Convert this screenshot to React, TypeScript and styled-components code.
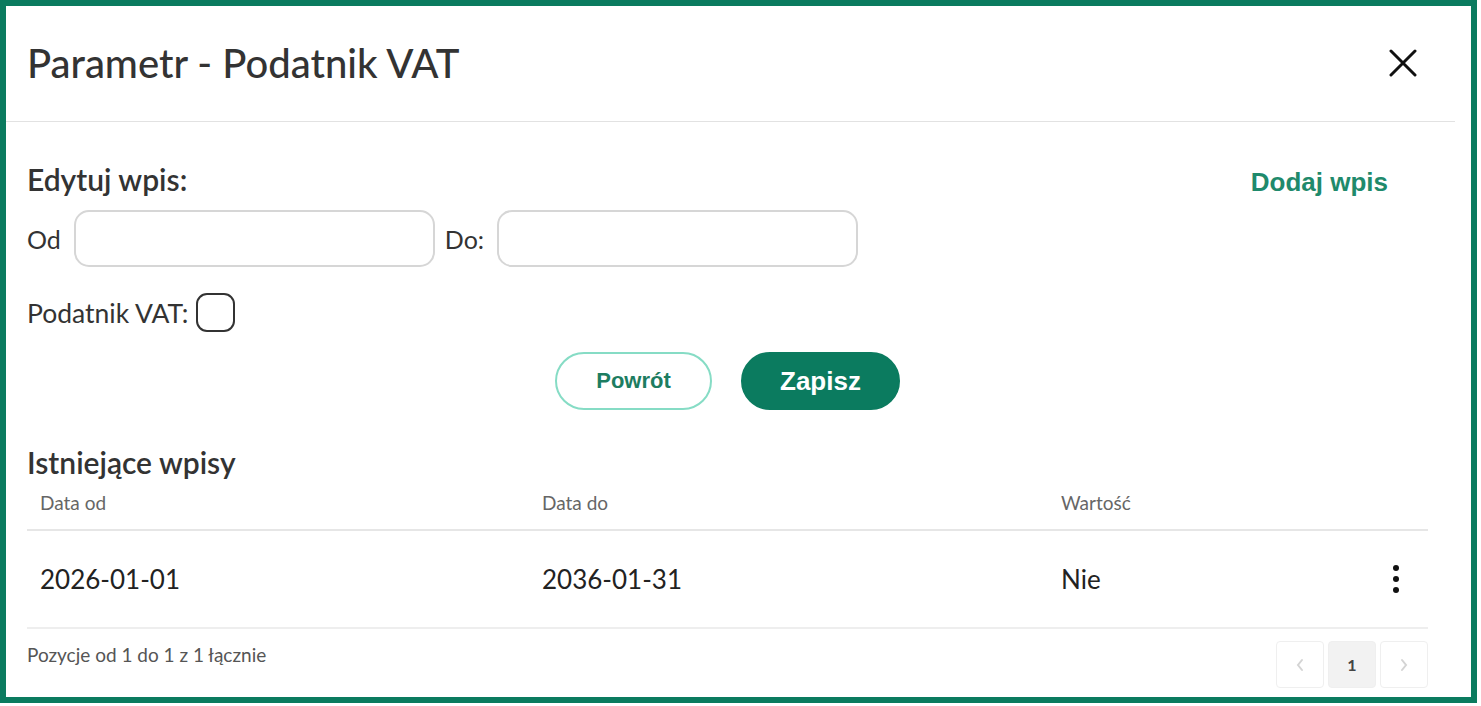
import React from 'react';
import styled, { createGlobalStyle } from 'styled-components';

type Entry = {
  id: number,
  from: string,
  to: string,
  value: string,
}

const entries: Entry[] = [
  { id: 1, from: '2026-01-01', to: '2036-01-31', value: 'Nie' },
];

const GlobalStyle = createGlobalStyle`
  * {
    box-sizing: border-box;
  }
  body {
    margin: 0;
    background: #fff;
    font-family: Lato, "Noto Sans", sans-serif;
    color: #333;
  }
`;

const CloseIcon = () => (
  <svg width="28" height="28" viewBox="0 0 28 28">
    <path d="M2 2 L26 26 M26 2 L2 26" stroke="#111" strokeWidth="3" strokeLinecap="round" />
  </svg>
);

const KebabIcon = () => (
  <svg width="8" height="30" viewBox="0 0 8 30">
    <circle cx="4" cy="4" r="3" fill="#111" />
    <circle cx="4" cy="15" r="3" fill="#111" />
    <circle cx="4" cy="26" r="3" fill="#111" />
  </svg>
);

const Chevron = ({ dir }: { dir: 'left' | 'right' }) => (
  <svg width="10" height="14" viewBox="0 0 10 14">
    <path
      d={dir === 'left' ? 'M7 2 L3 7 L7 12' : 'M3 2 L7 7 L3 12'}
      stroke="#d4d4d4"
      strokeWidth="2"
      fill="none"
      strokeLinecap="round"
    />
  </svg>
);

const App = () => {
  const renderRows = (): JSX.Element[] => {
    return entries.map(item => (
      <Row key={item.id}>
        <Cell>{item.from}</Cell>
        <Cell>{item.to}</Cell>
        <Cell>{item.value}</Cell>
        <ActionCell>
          <KebabIcon />
        </ActionCell>
      </Row>
    ));
  };

  return (
    <>
      <GlobalStyle />
      <Frame>
        <Header>
          <Title>Parametr - Podatnik VAT</Title>
          <CloseButton>
            <CloseIcon />
          </CloseButton>
        </Header>
        <Body>
          <EditHead>
            <SectionTitle>Edytuj wpis:</SectionTitle>
            <AddLink>Dodaj wpis</AddLink>
          </EditHead>
          <DateRow>
            <Label>Od</Label>
            <Input />
            <Label $gapLeft>Do:</Label>
            <Input />
          </DateRow>
          <CheckRow>
            <Label $wide>Podatnik VAT:</Label>
            <Checkbox />
          </CheckRow>
          <Buttons>
            <Button $primary={false}>Powrót</Button>
            <Button $primary>Zapisz</Button>
          </Buttons>
          <ListTitle>Istniejące wpisy</ListTitle>
          <Table>
            <HeadRow>
              <HeadCell>Data od</HeadCell>
              <HeadCell>Data do</HeadCell>
              <HeadCell>Wartość</HeadCell>
              <HeadCell />
            </HeadRow>
            {renderRows()}
          </Table>
          <Footer>
            <Summary>Pozycje od 1 do 1 z 1 łącznie</Summary>
            <Pager>
              <PageButton $active={false}><Chevron dir="left" /></PageButton>
              <PageButton $active>1</PageButton>
              <PageButton $active={false}><Chevron dir="right" /></PageButton>
            </Pager>
          </Footer>
        </Body>
      </Frame>
    </>
  );
};

const Frame = styled.div`
  width: 1477px;
  height: 703px;
  border: 6px solid #0b7b5f;
  background: #fff;
  overflow: hidden;
`;

const Header = styled.header`
  display: flex;
  align-items: center;
  justify-content: space-between;
  height: 116px;
  margin-right: 16px;
  padding: 0 38px 2px 21px;
  border-bottom: 1px solid #e2e2e2;
`;

const Title = styled.h1`
  margin: 0;
  font-size: 40px;
  font-weight: 500;
  color: #333;
`;

const CloseButton = styled.div`
  display: flex;
  width: 28px;
  height: 28px;
`;

const Body = styled.div`
  padding: 0 43px 0 21px;
`;

const EditHead = styled.div`
  display: flex;
  align-items: center;
  justify-content: space-between;
  height: 50px;
  margin-top: 32px;
  margin-bottom: 6px;
`;

const SectionTitle = styled.h2`
  margin: 0;
  font-size: 30px;
  font-weight: 600;
  color: #333;
`;

const AddLink = styled.span`
  margin-right: 40px;
  padding-top: 6px;
  font-family: "Liberation Sans", Arial, sans-serif;
  font-size: 26px;
  font-weight: 700;
  color: #1f8a6c;
`;

const DateRow = styled.div`
  display: flex;
  align-items: center;
  gap: 13px;
`;

const Label = styled.span<{ $gapLeft?: boolean, $wide?: boolean }>`
  margin-left: ${({ $gapLeft }) => ($gapLeft ? '-3px' : '0')};
  font-size: ${({ $wide }) => ($wide ? '26.5px' : '25px')};
  color: #333;
`;

const Input = styled.div`
  width: 361px;
  height: 57px;
  border: 2px solid #d6d6d6;
  border-radius: 15px;
  background: #fff;
`;

const CheckRow = styled.div`
  display: flex;
  align-items: center;
  gap: 8px;
  margin-top: 26px;
`;

const Checkbox = styled.div`
  width: 39px;
  height: 39px;
  border: 2px solid #333;
  border-radius: 11px;
`;

const Buttons = styled.div`
  display: flex;
  justify-content: center;
  gap: 29px;
  margin-top: 20px;
`;

const Button = styled.button<{ $primary: boolean }>`
  width: ${({ $primary }) => ($primary ? '159px' : '157px')};
  height: 58px;
  border-radius: 29px;
  border: 2px solid ${({ $primary }) => ($primary ? '#0b7b5f' : '#86dcc5')};
  background: ${({ $primary }) => ($primary ? '#0b7b5f' : '#fff')};
  color: ${({ $primary }) => ($primary ? '#fff' : '#1d7d61')};
  font-family: "Liberation Sans", Arial, sans-serif;
  font-size: ${({ $primary }) => ($primary ? '26px' : '22px')};
  font-weight: 700;
  cursor: pointer;
`;

const ListTitle = styled.h3`
  margin: 35px 0 0;
  font-size: 30px;
  font-weight: 600;
  color: #333;
  line-height: 34px;
`;

const Table = styled.div`
  margin-top: 6px;
`;

const HeadRow = styled.div`
  display: grid;
  grid-template-columns: 502px 519px 1fr 60px;
  height: 46px;
  align-items: center;
  border-bottom: 2px solid #e6e6e6;
`;

const HeadCell = styled.div`
  padding-left: 13px;
  padding-bottom: 10px;
  font-size: 19px;
  color: #666;
`;

const Row = styled.div`
  display: grid;
  grid-template-columns: 502px 519px 1fr 60px;
  height: 98px;
  align-items: center;
  border-bottom: 2px solid #eee;
`;

const Cell = styled.div`
  padding-left: 13px;
  font-size: 26px;
  color: #222;
`;

const ActionCell = styled.div`
  display: flex;
  justify-content: flex-end;
  padding-right: 28px;
`;

const Footer = styled.div`
  display: flex;
  align-items: center;
  justify-content: space-between;
  margin-top: 12px;
`;

const Summary = styled.span`
  font-size: 19px;
  color: #555;
  margin-top: -20px;
`;

const Pager = styled.div`
  display: flex;
  gap: 4px;
`;

const PageButton = styled.div<{ $active: boolean }>`
  display: flex;
  align-items: center;
  justify-content: center;
  width: 48px;
  height: 47px;
  border: 1px solid #efefef;
  border-radius: 4px;
  background: ${({ $active }) => ($active ? '#f2f2f2' : '#fff')};
  font-size: 16px;
  font-weight: 700;
  color: #444;
`;

export default App;
